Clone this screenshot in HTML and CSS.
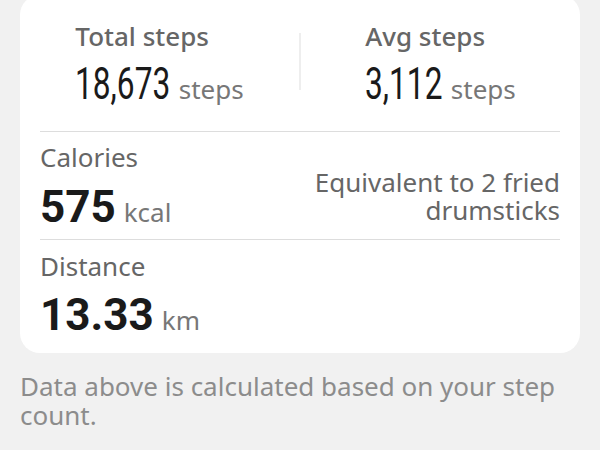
FILE: index.html
```html
<!DOCTYPE html>
<html lang="en">
<head>
  <meta charset="UTF-8" />
  <meta name="viewport" content="width=device-width, initial-scale=1.0" />
  <title>Step summary</title>
  <link rel="stylesheet" href="styles.css">
</head>
<body>
  <div class="card">
    <div class="steps_row">
      <div class="steps_col">
        <div class="steps_box">
          <div class="steps_label">Total steps</div>
          <div class="steps_value"><span class="num_narrow num_long">18,673</span><span class="unit">steps</span></div>
        </div>
      </div>
      <div class="v_line"></div>
      <div class="steps_col">
        <div class="steps_box">
          <div class="steps_label">Avg steps</div>
          <div class="steps_value"><span class="num_narrow num_short">3,112</span><span class="unit">steps</span></div>
        </div>
      </div>
    </div>
    <div class="h_line"></div>
    <div class="stat_row">
      <div>
        <div class="stat_label">Calories</div>
        <div class="stat_value"><span class="num_bold">575</span><span class="unit">kcal</span></div>
      </div>
      <div class="stat_note">
        <div>Equivalent to 2 fried</div>
        <div>drumsticks</div>
      </div>
    </div>
    <div class="h_line"></div>
    <div class="stat_row stat_last">
      <div>
        <div class="stat_label">Distance</div>
        <div class="stat_value"><span class="num_bold">13.33</span><span class="unit">km</span></div>
      </div>
    </div>
  </div>
  <p class="foot_note">Data above is calculated based on your step count.</p>
</body>
</html>
```

FILE: styles.css
```css
body {
  margin: 0;
  background: #f1f1f1;
  font-family: 'Noto Sans', 'Open Sans', sans-serif;
  color: #1a1a1a;
}

.card {
  margin: -5px 20px 0;
  background: #fff;
  border-radius: 20px;
}

.steps_row {
  display: flex;
  align-items: flex-start;
  padding: 27px 0 23px;
}
.steps_col {
  flex: 1;
  display: flex;
  justify-content: center;
}
.steps_label {
  font-size: 26px;
  line-height: 28px;
  font-weight: 500;
  color: #666;
}
.steps_value {
  margin-top: 10px;
  font-family: 'Roboto', sans-serif;
  font-size: 44px;
  line-height: 48px;
}
/* condensed digits: no narrow face installed, so squeeze Roboto */
.num_narrow {
  display: inline-block;
  transform: scaleX(0.72);
  transform-origin: left;
  color: #1a1a1a;
}
.num_long {
  margin-right: -37px;
}
.num_short {
  margin-right: -30px;
}
.unit {
  font-family: 'Noto Sans', 'Open Sans', sans-serif;
  font-size: 26px;
  font-weight: normal;
  line-height: 1;
  color: #777;
  margin-left: 8px;
}
.v_line {
  width: 2px;
  height: 57px;
  margin-top: 11px;
  background: #eee;
}

.h_line {
  height: 1px;
  margin: 0 20px;
  background: #ddd;
}

.stat_row {
  display: flex;
  justify-content: space-between;
  padding: 11px 20px 6px;
}
.stat_last {
  padding: 12px 20px 12px;
}
.stat_label {
  font-size: 26px;
  line-height: 28px;
  color: #666;
}
.stat_value {
  margin-top: 10px;
  font-family: 'Roboto', sans-serif;
  font-size: 44px;
  line-height: 52px;
}
.stat_last .stat_value {
  margin-top: 9px;
}
.num_bold {
  font-weight: bold;
}
.stat_note {
  align-self: flex-end;
  margin-bottom: 9px;
  text-align: right;
  font-size: 26px;
  line-height: 28px;
  color: #666;
}

.foot_note {
  margin: 19px 20px 0;
  font-size: 26px;
  line-height: 29px;
  color: #8c8c8c;
}
```
